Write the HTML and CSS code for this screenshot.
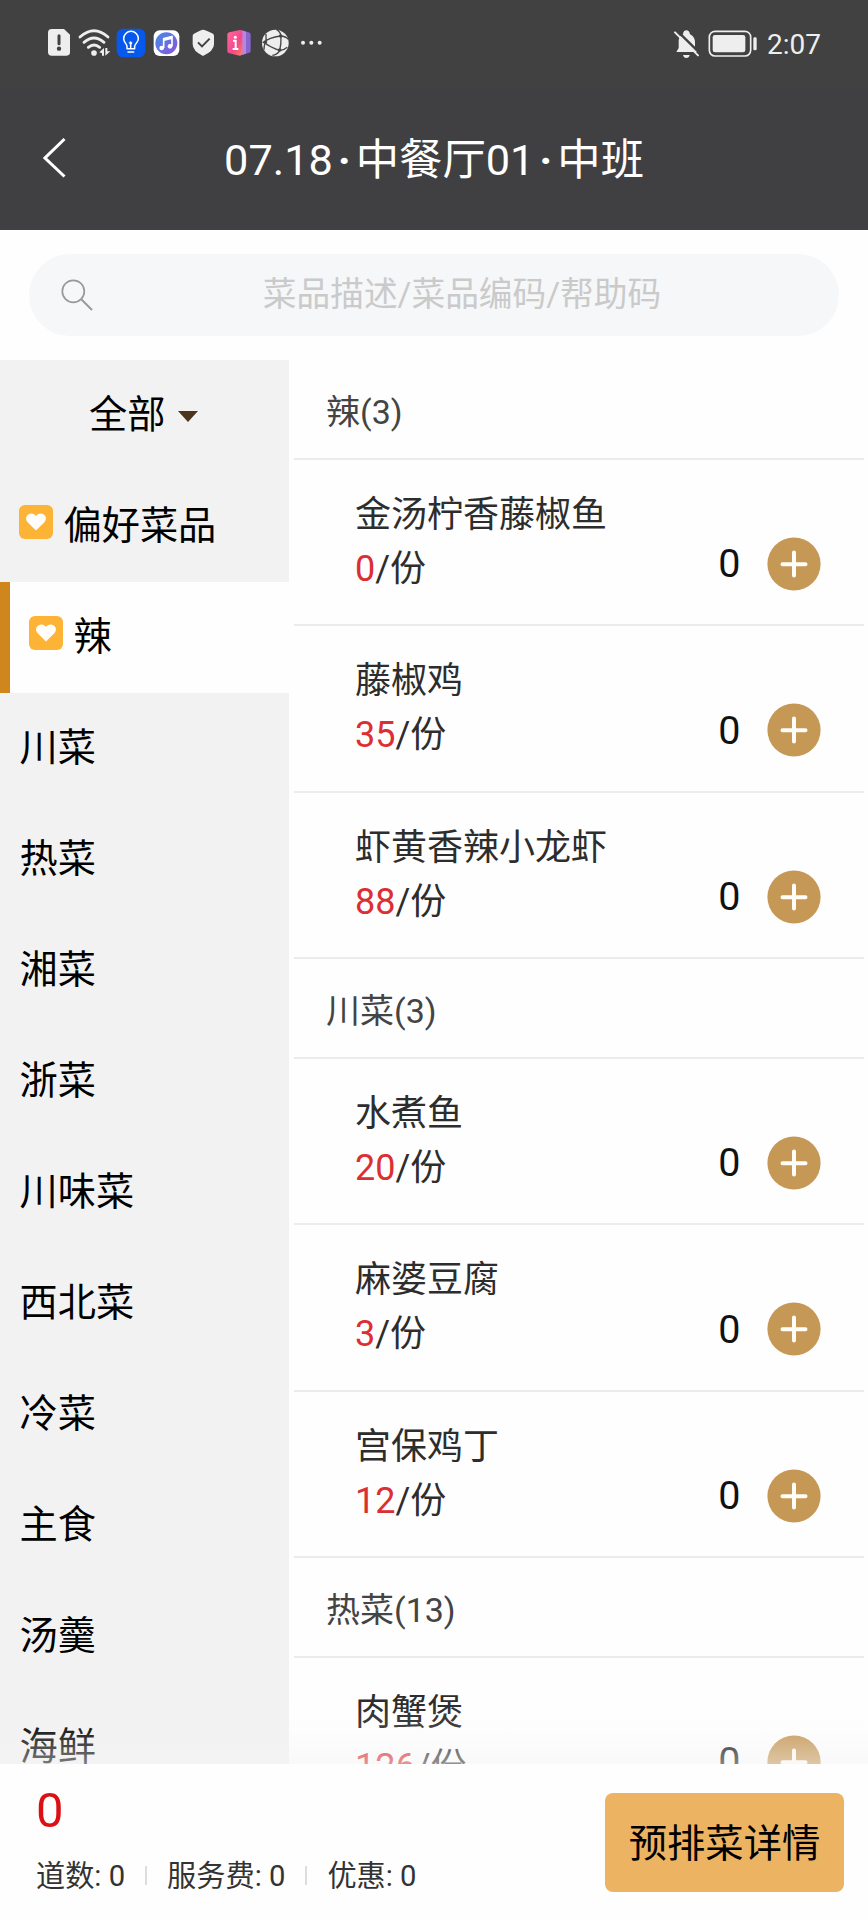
FILE: index.html
```html
<!DOCTYPE html>
<html lang="zh-CN">
<head>
<meta charset="utf-8">
<title>07.18·中餐厅01·中班</title>
<link rel="stylesheet" href="styles.css">
</head>
<body>
<svg class="defs" aria-hidden="true">
  <symbol id="plus" viewBox="0 0 54 54"><circle cx="27" cy="27" r="26.6" fill="#c69856"/><path d="M27 15.500v23M15.500 27.200h23" stroke="#fffdf8" stroke-width="4" stroke-linecap="round"/></symbol>
  <symbol id="heart" viewBox="0 0 34 34"><rect width="34" height="34" rx="6" fill="#fdb335"/><path d="M17 25.6 8.6 17.200C6.200 14.500 6.800 10.800 9.500 9.300 12.300 7.800 15.500 8.600 17 11c1.500-2.400 4.700-3.200 7.500-1.700 2.700 1.500 3.300 5.200.9 7.900z" fill="#fffefa"/></symbol>
</svg>
<div class="screen">
  <header class="header">
    <div class="status">
      <svg class="status-left" viewBox="0 0 930 165">
        <defs>
          <linearGradient id="pink" x1="0" y1="0" x2="1" y2="1"><stop stop-color="#ff6b9b"/><stop offset=".6" stop-color="#f3478c"/><stop offset="1" stop-color="#ff8058"/></linearGradient>
          <linearGradient id="note" x1="0" y1="0" x2="1" y2="1"><stop stop-color="#428bea"/><stop offset="1" stop-color="#8a55d8"/></linearGradient>
        </defs>
        <path d="M65 42h37l18 17v53q0 10-10 10H65q-11 0-11-11V53q0-11 11-11z" fill="#eee"/>
        <path d="M87 62v24" stroke="#414141" stroke-width="9" stroke-linecap="round"/><circle cx="87" cy="101" r="6.500" fill="#414141"/>
        <g fill="none" stroke="#eee" stroke-width="8.500" stroke-linecap="round"><path d="M150 66q42-38 84 0M162 82q30-26 60 0M175 97q17-14 34 0"/></g>
        <circle cx="192" cy="114" r="8.500" fill="#eee"/><path d="M208 112l14-13v23h-6v-7zM226 99v23l15-13h-9v-10z" fill="#eee"/>
        <rect x="260" y="41" width="86" height="86" rx="20" fill="#0759ee"/>
        <g fill="none" stroke="#fff" stroke-width="4.500" stroke-linecap="round" stroke-linejoin="round"><path d="M291 101v-7c0-7-10-12-10-23a22 22 0 0 1 44 0c0 11-11 16-11 23v7zM294 111h17M302 98V86"/><path d="M302 79l5 5-5 5-5-5z" fill="#fff" stroke-width="1"/></g>
        <rect x="371" y="46" width="77" height="77" rx="18" fill="#fff"/><circle cx="409" cy="85" r="33" fill="url(#note)"/>
        <path d="M401 99V71l25-6v28" fill="none" stroke="#fff" stroke-width="5"/><path d="M401 74l25-6" stroke="#fff" stroke-width="8"/><circle cx="395" cy="99" r="7" fill="#fff"/><circle cx="420" cy="94" r="7" fill="#fff"/>
        <path d="M519 44q6 0 30 12 3 2 3 7v25q0 20-33 35-31-15-31-35V63q0-5 4-7 22-12 27-12z" fill="#eee"/><path d="M504 82l12 12 23-23" fill="none" stroke="#414141" stroke-width="6"/>
        <path d="M632 46l24 6q6 2 6 7v49q0 5-6 6l-24 6z" fill="#8865cf"/><path d="M635 46l13 4v66l-13 4z" fill="#b985dd"/>
        <path d="M592 58q0-5 6-6l31-7q8-1 8 7v63q0 8-8 7l-31-7q-6-1-6-6z" fill="url(#pink)"/><path d="M609 77h8v25m-9 0h17" fill="none" stroke="#fff" stroke-width="6"/><circle cx="616" cy="67" r="4.500" fill="#fff"/>
        <circle cx="736" cy="84" r="40" fill="#eee"/><g fill="none" stroke="#454545" stroke-width="4"><path d="M739 43q13 7 14 21 1 22-4 43-7 13-22 14M698 84q20-17 53-21 17 1 24 10M702 104q0-11 3-20 13 11 44 23 14-2 23-10M708 57l0 22"/></g><circle cx="706" cy="81" r="5.500" fill="#454545"/><circle cx="752" cy="63" r="5.500" fill="#454545"/><circle cx="749" cy="105" r="5.500" fill="#454545"/>
        <g fill="#eee"><circle cx="819" cy="83" r="6"/><circle cx="844" cy="83" r="6"/><circle cx="869" cy="83" r="6"/></g>
      </svg>
      <div class="status-right">
        <svg class="status-power" viewBox="66 40 260 90">
          <path d="M79 109l7-12V74q2-13 13-18 1-12 10-12t11 12q14 6 15 24v18l7 11zM99 118h20q-2 9-10 9t-10-9z" fill="#eee"/>
          <path d="M80 44l68 67" stroke="#414141" stroke-width="7"/><path d="M75 50l69 69" stroke="#eee" stroke-width="6" stroke-linecap="round"/>
          <rect x="178" y="47" width="124" height="74" rx="17" fill="none" stroke="#eee" stroke-width="5"/><rect x="188" y="58" width="98" height="52" rx="7" fill="#eee"/><rect x="310" y="65" width="10" height="39" rx="4" fill="#eee"/>
        </svg>
        <span class="clock">2:07</span>
      </div>
    </div>
    <div class="titlebar">
      <svg class="back" viewBox="0 0 24 42"><path d="M21.500 2 2 21l19.500 18.500" fill="none" stroke="#fff" stroke-width="3"/></svg>
      <h1 class="title">07.18<span class="dot">·</span>中餐厅01<span class="dot">·</span>中班</h1>
    </div>
  </header>

  <div class="search">
    <svg class="search-icon" viewBox="0 0 32 32"><circle cx="12.300" cy="12.300" r="11" fill="none" stroke="#999" stroke-width="1.700"/><path d="M20.500 20.500 31 31" stroke="#999" stroke-width="2"/></svg>
    <span class="search-hint">菜品描述/菜品编码/帮助码</span>
  </div>

  <main class="content">
    <nav class="side">
      <div class="cat all">全部<i class="caret"></i></div>
      <div class="cat"><svg class="heart"><use href="#heart"/></svg>偏好菜品</div>
      <div class="cat active"><svg class="heart"><use href="#heart"/></svg>辣</div>
      <div class="cat">川菜</div>
      <div class="cat">热菜</div>
      <div class="cat">湘菜</div>
      <div class="cat">浙菜</div>
      <div class="cat">川味菜</div>
      <div class="cat">西北菜</div>
      <div class="cat">冷菜</div>
      <div class="cat">主食</div>
      <div class="cat">汤羹</div>
      <div class="cat">海鲜</div>
    </nav>
    <div class="list">
      <h2 class="group">辣(3)</h2>
      <div class="dish"><div class="info"><div>金汤柠香藤椒鱼</div><div><b>0</b>/份</div></div><div class="step"><span>0</span><svg class="plus"><use href="#plus"/></svg></div></div>
      <div class="dish"><div class="info"><div>藤椒鸡</div><div><b>35</b>/份</div></div><div class="step"><span>0</span><svg class="plus"><use href="#plus"/></svg></div></div>
      <div class="dish"><div class="info"><div>虾黄香辣小龙虾</div><div><b>88</b>/份</div></div><div class="step"><span>0</span><svg class="plus"><use href="#plus"/></svg></div></div>
      <h2 class="group">川菜(3)</h2>
      <div class="dish"><div class="info"><div>水煮鱼</div><div><b>20</b>/份</div></div><div class="step"><span>0</span><svg class="plus"><use href="#plus"/></svg></div></div>
      <div class="dish"><div class="info"><div>麻婆豆腐</div><div><b>3</b>/份</div></div><div class="step"><span>0</span><svg class="plus"><use href="#plus"/></svg></div></div>
      <div class="dish"><div class="info"><div>宫保鸡丁</div><div><b>12</b>/份</div></div><div class="step"><span>0</span><svg class="plus"><use href="#plus"/></svg></div></div>
      <h2 class="group">热菜(13)</h2>
      <div class="dish"><div class="info"><div>肉蟹煲</div><div><b>126</b>/份</div></div><div class="step"><span>0</span><svg class="plus"><use href="#plus"/></svg></div></div>
    </div>
    <div class="fade"></div>
  </main>

  <footer class="footer">
    <div class="summary">
      <div class="total">0</div>
      <div class="meta"><span>道数: 0</span><i></i><span>服务费: 0</span><i></i><span>优惠: 0</span></div>
    </div>
    <button class="detail">预排菜详情</button>
  </footer>
</div>
</body>
</html>
```
FILE: styles.css
```css
* { box-sizing: border-box; }
body { margin: 0; background: #fefefe; font-family: Roboto, "Noto Sans CJK SC", sans-serif; color: #000; }
.defs { position: absolute; width: 0; height: 0; }
.screen { width: 868px; height: 1920px; display: flex; flex-direction: column; overflow: hidden; }

.header { height: 230px; flex: none; background: #404042; color: #fff; }
.status { height: 88px; padding: 15px 48px 0 30px; display: flex; justify-content: space-between; background: #414141; }
.status-left { width: 310px; height: 55px; }
.status-right { height: 57px; display: flex; align-items: center; }
.status-power { width: 86.700px; height: 30px; margin-right: 8px; }
.clock { width: 53px; font-size: 28px; line-height: 40px; color: #eee; white-space: nowrap; padding-top: 2px; }
.titlebar { height: 142px; padding: 0 43px; display: grid; grid-template-columns: 24px 1fr 24px; align-items: center; }
.back { width: 24px; height: 42px; margin-top: -2px; }
.title { margin: 4px 0 0; font-size: 43.300px; line-height: 60px; font-weight: 400; text-align: center; white-space: nowrap; }
.dot { display: inline-block; width: 23px; text-align: center; font-weight: 700; }

.search { flex: none; height: 82px; margin: 24px 29px; padding: 0 32px; border-radius: 41px; background: #f6f7f9; display: grid; grid-template-columns: 32px 1fr 32px; align-items: center; }
.search-icon { width: 32px; height: 32px; }
.search-hint { text-align: center; font-size: 33.700px; line-height: 48px; color: #cacaca; white-space: nowrap; margin-right: -58px; margin-left: -2px; }

.content { position: relative; flex: none; height: 1404px; display: flex; gap: 5px; overflow: hidden; }
.side { width: 289px; height: 1443px; flex: none; background: #f2f2f2; }
.cat { height: 111px; padding: 0 0 1px 19.500px; display: flex; align-items: center; font-size: 38.200px; line-height: 56px; }
.all { padding-left: 89px; }
.caret { width: 0; height: 0; margin: 2px 0 0 13px; border: solid transparent; border-width: 11px 10px 0; border-top-color: #4d341d; }
.heart { width: 34px; height: 34px; margin: -8px 11px 0 -1px; }
.active { background: #fefefe; border-left: 10px solid #cf871d; }
.list { width: 570px; flex: none; }
.group { height: 99.600px; margin: 0; padding-left: 32px; border-bottom: 2px solid #ececec; font-size: 34px; line-height: 98px; font-weight: 400; color: #444; padding-top: 3px; }
.dish { height: 166.500px; padding-left: 61px; padding-right: 43.500px; border-bottom: 2px solid #ececec; display: flex; justify-content: space-between; color: #2d2d2d; }
.info { padding-top: 28px; font-size: 36px; line-height: 54px; white-space: nowrap; }
.info b { font-weight: 400; color: #dc2f33; }
.step { height: 54px; margin-top: 77px; display: flex; align-items: center; gap: 26px; font-size: 39.500px; color: #111; }
.plus { width: 54px; height: 54px; }
.fade { position: absolute; left: 0; right: 0; bottom: 0; height: 60px; background: linear-gradient(rgba(246,246,246,0), rgba(246,246,246,.1) 40%, rgba(244,244,244,.5)); }

.footer { flex: none; height: 156px; padding: 0 24px 0 36px; display: flex; justify-content: space-between; background: #fefefe; }
.total { height: 82px; padding-top: 6px; font-size: 49px; line-height: 82px; color: #dc1014; }
.meta { display: flex; align-items: center; height: 54px; font-size: 29.200px; color: #333; white-space: nowrap; }
.meta i { width: 2px; height: 19px; margin: 4px 20px 0; background: #ddd; }
.detail { width: 239px; height: 99px; margin-top: 29px; padding: 3px 0 0; border: 0; border-radius: 8px; background: #ecb462; color: #000; font: 38.300px/60px Roboto, "Noto Sans CJK SC", sans-serif; white-space: nowrap; }
```
